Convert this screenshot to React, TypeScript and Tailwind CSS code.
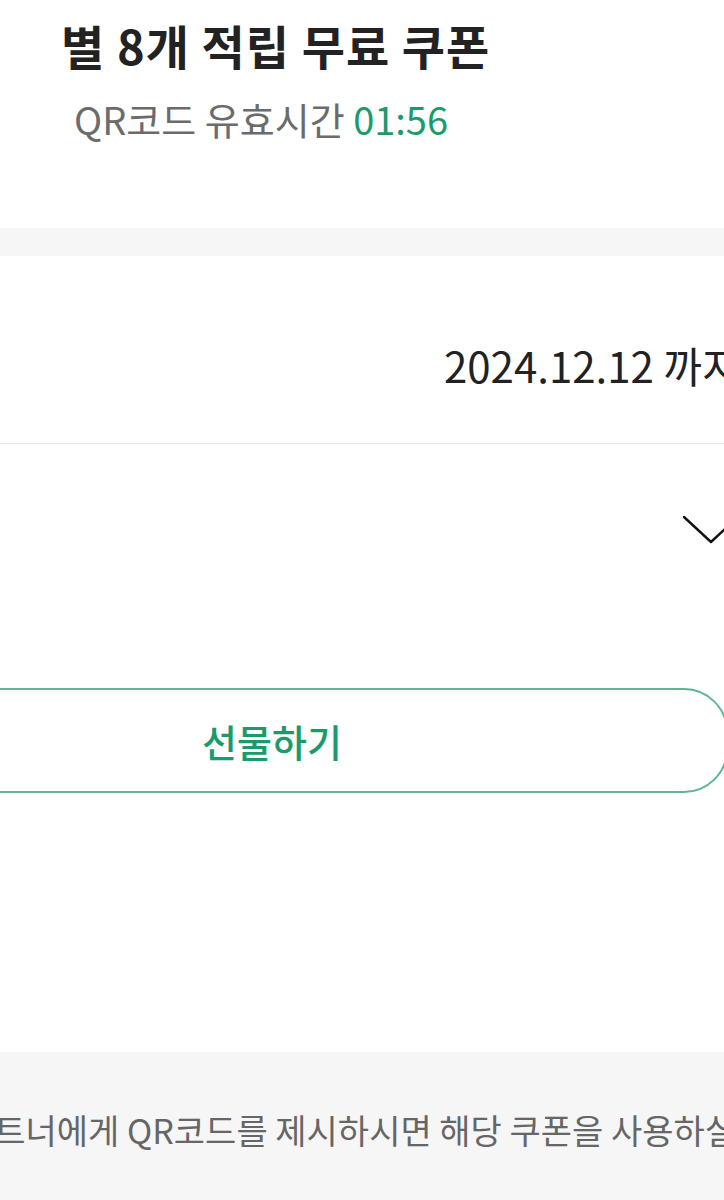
const FONT = '[font-family:"Noto_Sans_CJK_KR","Noto_Sans",sans-serif]'

function Chevron() {
  return (
    <svg width="56" height="30" viewBox="0 0 56 30" fill="none" className="-mr-[15px]">
      <path d="M1 2 L28 27 L55 2" stroke="#111111" strokeWidth="2.4" strokeLinecap="round" strokeLinejoin="round" />
    </svg>
  )
}

export default function App() {
  return (
    <div className={`h-[1200px] w-[724px] overflow-hidden bg-white ${FONT}`}>
      {/* header */}
      <section className="h-[228px] pt-[17px]">
        <h1 className="pl-[61px] text-[47px] leading-[56px] font-bold tracking-[1px] whitespace-nowrap text-[#222222]">
          별 8개 적립 무료 쿠폰
        </h1>
        <p className="mt-[23px] pl-[74px] text-[38px] leading-[46px] whitespace-nowrap text-[#6b6b6b]">
          QR코드 유효시간 <span className="text-[#1a9b6b]">01:56</span>
        </p>
      </section>

      <div className="h-[28px] bg-[#f6f6f6]" />

      {/* expiry */}
      <section className="h-[188px] border-b border-[#e6e6e6] pt-[84px] pl-[444px]">
        <p className="text-[42px] leading-[50px] whitespace-nowrap text-[#222222]">2024.12.12 까지</p>
      </section>

      {/* details toggle */}
      <div className="flex h-[244px] justify-end pt-[71px]">
        <Chevron />
      </div>

      {/* gift button */}
      <button className="-ml-[184px] flex h-[105px] w-[912px] items-center justify-center rounded-[44px] border-2 border-[#5db592] bg-white">
        <span className="text-[38px] leading-[46px] font-medium text-[#1a9b6b]">선물하기</span>
      </button>

      <div className="h-[259px]" />

      {/* notice */}
      <section className="h-[148px] bg-[#f6f6f6] pt-[55px]">
        <p className="-ml-[37px] text-[34px] leading-[46px] whitespace-nowrap text-[#666666]">
          파트너에게 QR코드를 제시하시면 해당 쿠폰을 사용하실 수 있습니다.
        </p>
      </section>
    </div>
  )
}
